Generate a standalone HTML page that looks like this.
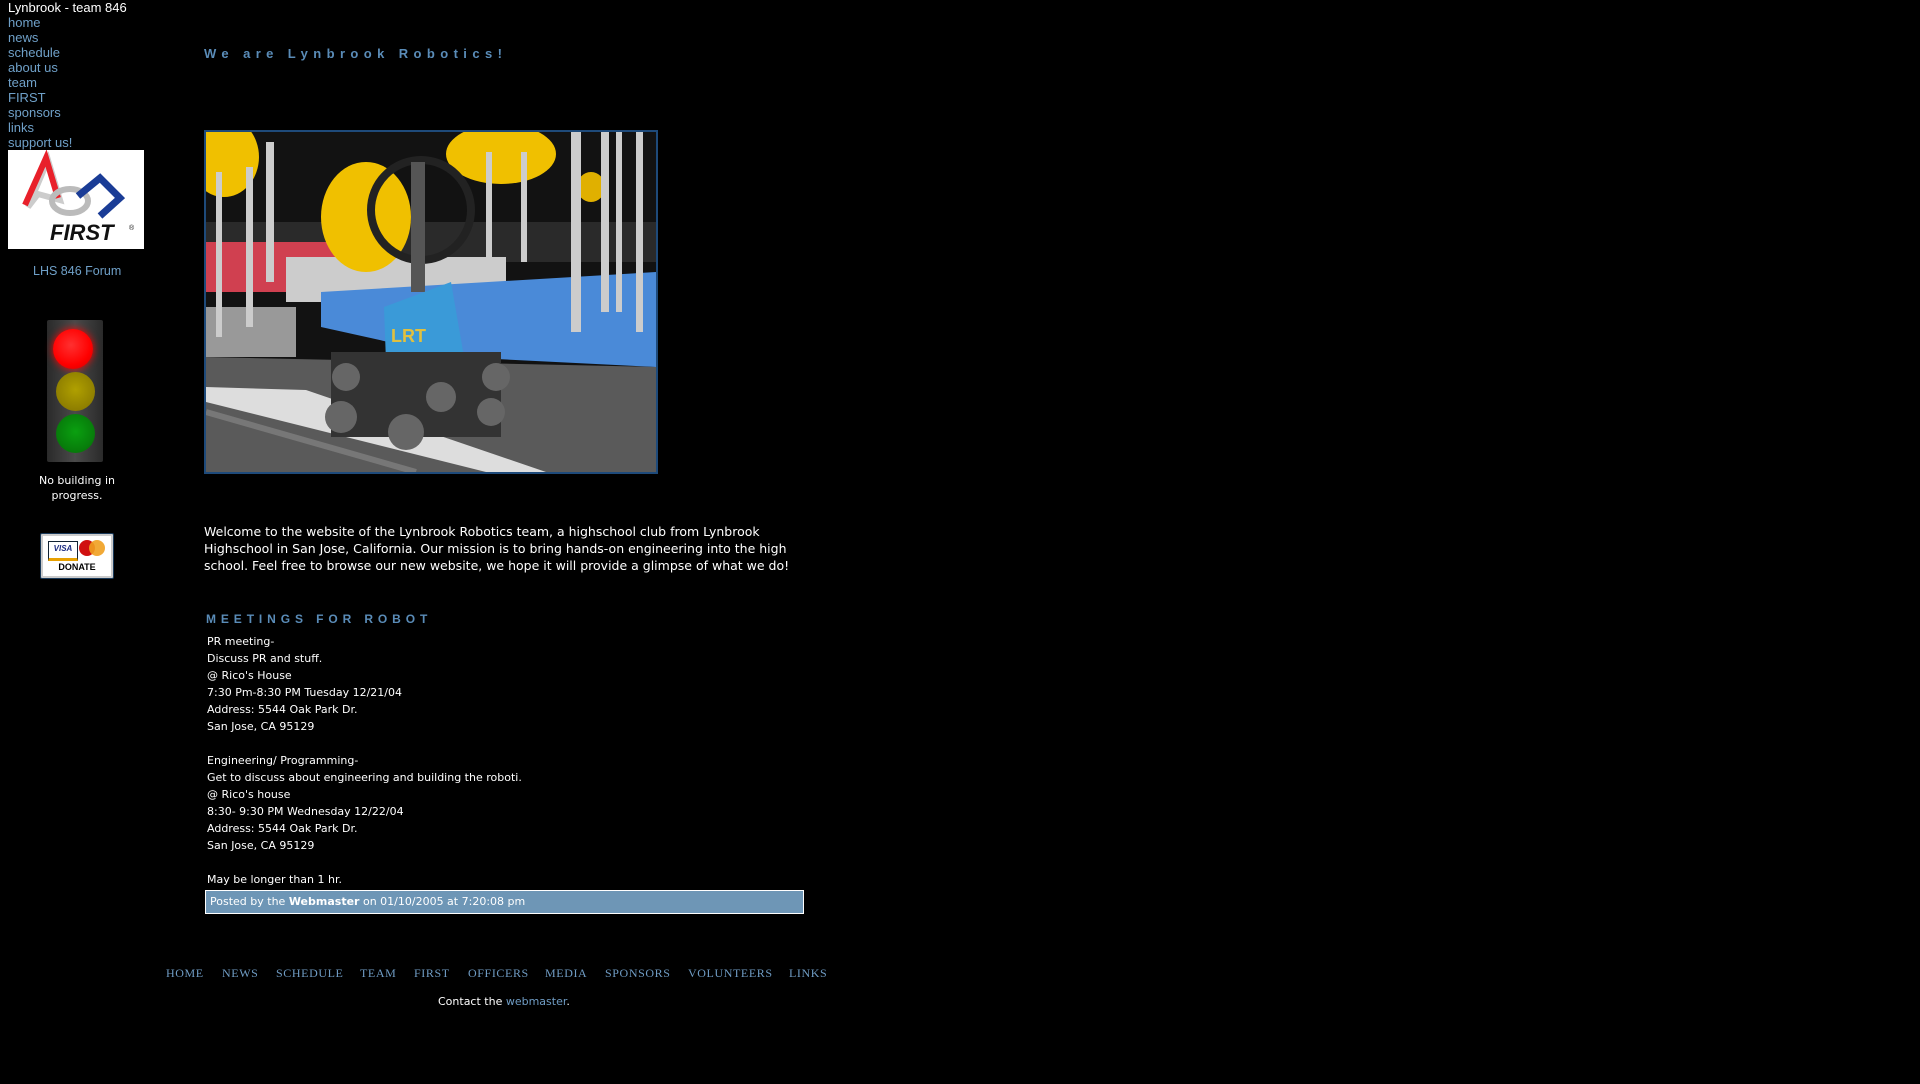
<!DOCTYPE html>
<html><head><meta charset="utf-8"><style>
html,body{margin:0;padding:0;background:#000;width:1920px;height:1084px;overflow:hidden;position:relative;font-family:"Liberation Sans",sans-serif}
.a{position:absolute;white-space:nowrap}
.menu{left:8px;top:0;font-size:13px;line-height:15px;color:#6fa0c8}
.menu div:first-child{color:#fff}
.title{left:204px;top:46px;font-size:13px;font-weight:bold;letter-spacing:5.4px;color:#5a8cb8}
.welcome{left:204px;top:523px;font-family:"DejaVu Sans",sans-serif;font-size:12.5px;line-height:17px;color:#fff}
.meet{left:206px;top:612px;font-size:12px;font-weight:bold;letter-spacing:4.9px;color:#5a8cb8}
.body{left:207px;top:633px;font-family:"DejaVu Sans",sans-serif;font-size:11px;line-height:17px;color:#fff}
.posted{left:205px;top:890px;width:593px;height:22px;border:1px solid #fff;background:#6e96b6;color:#fff;font-family:"DejaVu Sans",sans-serif;font-size:11px;line-height:22px;padding-left:4px;box-sizing:content-box}
.nav{top:966px;font-family:"Liberation Serif",serif;font-size:12px;color:#6f9cc4;letter-spacing:0.6px}
</style></head><body>
<div class="a menu"><div>Lynbrook - team 846</div><div>home</div><div>news</div><div>schedule</div><div>about us</div><div>team</div><div>FIRST</div><div>sponsors</div><div>links</div><div>support us!</div></div>
<div class="a" style="left:8px;top:150px;width:136px;height:99px;background:#fff">
<svg width="136" height="99" viewBox="0 0 136 99">
<path d="M20 57 L40 10 L52 50 L30 44 Z" fill="none" stroke="#ccc" stroke-width="6"/>
<path d="M17 55 L38 8 L50 48" fill="none" stroke="#e8202a" stroke-width="6"/>
<ellipse cx="62" cy="51" rx="18" ry="12" fill="none" stroke="#bbb" stroke-width="6"/>
<path d="M70 46 L92 28 L112 48 L92 66" fill="none" stroke="#1a3c96" stroke-width="7"/>
<text x="42" y="90" font-family="Liberation Sans" font-weight="bold" font-style="italic" font-size="22" fill="#111">FIRST</text>
<text x="121" y="80" font-size="7" fill="#111">®</text></svg></div>
<div class="a" style="left:33px;top:264px;font-size:12.5px;color:#6fa0c8">LHS 846 Forum</div>
<div class="a" style="left:47px;top:320px;width:56px;height:142px;background:linear-gradient(90deg,#2a2a2a,#4a4a4a 50%,#2a2a2a);border-radius:2px">
<div class="a" style="left:6px;top:9px;width:40px;height:40px;border-radius:50%;background:radial-gradient(circle at 45% 40%,#ff3030,#ff0000 60%,#c00);box-shadow:0 0 8px #f00"></div>
<div class="a" style="left:9px;top:52px;width:39px;height:39px;border-radius:50%;background:radial-gradient(circle at 50% 45%,#b0a000,#807000)"></div>
<div class="a" style="left:9px;top:94px;width:39px;height:39px;border-radius:50%;background:radial-gradient(circle at 50% 45%,#0aa010,#066a08)"></div></div>
<div class="a" style="left:34px;top:473px;width:86px;text-align:center;white-space:normal;font-family:'DejaVu Sans',sans-serif;font-size:11px;line-height:15px;color:#fff">No building in progress.</div>
<div class="a" style="left:40px;top:533px;width:72px;height:44px;background:#fff;border:1px solid #1a3a5a;border-radius:2px;box-shadow:inset 0 0 0 2px #ccc">
<div class="a" style="left:7px;top:7px;width:28px;height:16px;border:1px solid #123;background:#fff;font-size:8px;font-weight:bold;font-style:italic;color:#1a2a80;text-align:center;line-height:14px;border-bottom:3px solid #e8a000">VISA</div>
<div class="a" style="left:38px;top:6px;width:16px;height:16px;border-radius:50%;background:#d01010"></div>
<div class="a" style="left:48px;top:6px;width:16px;height:16px;border-radius:50%;background:#f0a020;opacity:.9"></div>
<div class="a" style="left:0;top:28px;width:72px;text-align:center;font-size:9px;font-weight:bold;color:#000">DONATE</div></div>
<div class="a title">We are Lynbrook Robotics!</div>
<div class="a" style="left:204px;top:130px;width:450px;height:340px;border:2px solid #1e4a7a;overflow:hidden">
<svg width="450" height="340" viewBox="0 0 450 340">
<rect width="450" height="340" fill="#121212"/>
<rect x="0" y="90" width="450" height="40" fill="#2a2a2a"/>
<polygon points="0,110 150,110 140,160 0,160" fill="#d04050"/>
<polygon points="80,125 300,125 300,170 80,170" fill="#ccc"/>
<polygon points="115,160 450,140 450,235 250,225 115,195" fill="#4a8ad8"/>
<polygon points="0,175 90,175 90,225 0,225" fill="#999"/>
<polygon points="0,225 450,235 450,340 0,340" fill="#5a5a5a"/>
<polygon points="0,255 100,258 340,340 280,340 0,270" fill="#ddd"/>
<ellipse cx="18" cy="25" rx="35" ry="40" fill="#f0c000"/>
<ellipse cx="295" cy="22" rx="55" ry="30" fill="#f0c000"/>
<ellipse cx="160" cy="85" rx="45" ry="55" fill="#f0c000"/>
<ellipse cx="385" cy="55" rx="14" ry="15" fill="#e0b000"/>
<g fill="#ccc"><rect x="40" y="35" width="7" height="160"/><rect x="10" y="40" width="6" height="165"/><rect x="60" y="10" width="8" height="140"/><rect x="280" y="20" width="6" height="120"/><rect x="315" y="20" width="6" height="110"/><rect x="365" y="0" width="10" height="200"/><rect x="395" y="0" width="8" height="180"/><rect x="430" y="0" width="7" height="200"/><rect x="410" y="0" width="6" height="180"/></g>
<circle cx="215" cy="78" r="50" fill="none" stroke="#222" stroke-width="8"/>
<rect x="205" y="30" width="14" height="130" fill="#555"/>
<polygon points="178,175 245,150 258,225 180,230" fill="#3a9ad8"/>
<text x="185" y="210" font-family="Liberation Sans" font-weight="bold" font-size="18" fill="#e0c040">LRT</text>
<rect x="125" y="220" width="170" height="85" fill="#333"/>
<g fill="#666"><circle cx="140" cy="245" r="14"/><circle cx="135" cy="285" r="16"/><circle cx="200" cy="300" r="18"/><circle cx="290" cy="245" r="14"/><circle cx="285" cy="280" r="14"/><circle cx="235" cy="265" r="15"/></g>
<line x1="0" y1="280" x2="210" y2="340" stroke="#777" stroke-width="6"/>
</svg></div>
<div class="a welcome">Welcome to the website of the Lynbrook Robotics team, a highschool club from Lynbrook<br>Highschool in San Jose, California. Our mission is to bring hands-on engineering into the high<br>school. Feel free to browse our new website, we hope it will provide a glimpse of what we do!</div>
<div class="a meet">MEETINGS FOR ROBOT</div>
<div class="a body">PR meeting-<br>Discuss PR and stuff.<br>@ Rico's House<br>7:30 Pm-8:30 PM Tuesday 12/21/04<br>Address: 5544 Oak Park Dr.<br>San Jose, CA 95129<br><br>Engineering/ Programming-<br>Get to discuss about engineering and building the roboti.<br>@ Rico's house<br>8:30- 9:30 PM Wednesday 12/22/04<br>Address: 5544 Oak Park Dr.<br>San Jose, CA 95129<br><br>May be longer than 1 hr.</div>
<div class="a posted">Posted by the <b>Webmaster</b> on 01/10/2005 at 7:20:08 pm</div>
<div class="a nav" style="left:166px">HOME</div>
<div class="a nav" style="left:222px">NEWS</div>
<div class="a nav" style="left:276px">SCHEDULE</div>
<div class="a nav" style="left:360px">TEAM</div>
<div class="a nav" style="left:414px">FIRST</div>
<div class="a nav" style="left:468px">OFFICERS</div>
<div class="a nav" style="left:545px">MEDIA</div>
<div class="a nav" style="left:605px">SPONSORS</div>
<div class="a nav" style="left:688px">VOLUNTEERS</div>
<div class="a nav" style="left:789px">LINKS</div>
<div class="a" style="left:438px;top:995px;font-family:'DejaVu Sans',sans-serif;font-size:11px;color:#fff">Contact the <span style="color:#6f9cc4">webmaster</span>.</div>
</body></html>
